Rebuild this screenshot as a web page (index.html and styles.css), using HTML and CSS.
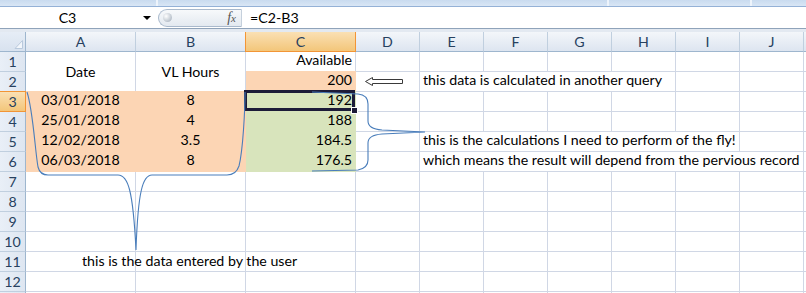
FILE: index.html
```html
<!DOCTYPE html>
<html>
<head>
<meta charset="utf-8">
<link rel="stylesheet" href="styles.css">
</head>
<body>
<div class="app">
  <div class="ribbon-edge">
    <span class="seg seg-1"></span>
    <span class="seg seg-2"></span>
    <span class="seg seg-3"></span>
    <span class="seg seg-4"></span>
  </div>
  <div class="formula-bar">
    <div class="name-box"><span class="name">C3</span><span class="dd"></span></div>
    <div class="fx-pill"><span class="knob"></span><span class="fx">f<span class="fx-x">x</span></span></div>
    <div class="formula">=C2-B3</div>
  </div>
  <div class="sep"></div>
  <div class="sheet">
    <!-- header row -->
    <div class="corner"><svg width="26" height="20" viewBox="0 0 26 20"><path d="M15 16.5 L22.5 8.5 L22.5 16.5 Z" fill="#f2f6fb" stroke="#b9c9dc"/></svg></div>
    <div class="ch">A</div>
    <div class="ch">B</div>
    <div class="ch sel">C</div>
    <div class="ch">D</div>
    <div class="ch">E</div>
    <div class="ch">F</div>
    <div class="ch">G</div>
    <div class="ch">H</div>
    <div class="ch">I</div>
    <div class="ch">J</div>
    <div class="ch k"></div>

    <!-- row 1 -->
    <div class="rh">1</div>
    <div class="c ctr mid span2r">Date</div>
    <div class="c ctr mid span2r">VL Hours</div>
    <div class="c rt">Available</div>
    <div class="c"></div><div class="c"></div><div class="c"></div><div class="c"></div><div class="c"></div><div class="c"></div><div class="c"></div>
    <div class="c k"></div>

    <!-- row 2 -->
    <div class="rh">2</div>
    <div class="c rt peach">200</div>
    <div class="c"></div>
    <div class="c span4">this data is calculated in another query</div>
    <div class="c"></div><div class="c"></div>
    <div class="c k"></div>

    <!-- row 3 -->
    <div class="rh sel">3</div>
    <div class="c ctr peach">03/01/2018</div>
    <div class="c ctr peach">8</div>
    <div class="c rt green active">192</div>
    <div class="c"></div><div class="c"></div><div class="c"></div><div class="c"></div><div class="c"></div><div class="c"></div><div class="c"></div>
    <div class="c k"></div>

    <!-- row 4 -->
    <div class="rh">4</div>
    <div class="c ctr peach">25/01/2018</div>
    <div class="c ctr peach">4</div>
    <div class="c rt green">188</div>
    <div class="c"></div><div class="c"></div><div class="c"></div><div class="c"></div><div class="c"></div><div class="c"></div><div class="c"></div>
    <div class="c k"></div>

    <!-- row 5 -->
    <div class="rh">5</div>
    <div class="c ctr peach">12/02/2018</div>
    <div class="c ctr peach">3.5</div>
    <div class="c rt green">184.5</div>
    <div class="c"></div>
    <div class="c span5">this is the calculations I need to perform of the fly!</div>
    <div class="c"></div>
    <div class="c k"></div>

    <!-- row 6 -->
    <div class="rh">6</div>
    <div class="c ctr peach">06/03/2018</div>
    <div class="c ctr peach">8</div>
    <div class="c rt green">176.5</div>
    <div class="c"></div>
    <div class="c span6">which means the result will depend from the pervious record</div>
    <div class="c k"></div>

    <!-- rows 7-13 -->
    <div class="rh">7</div>
    <div class="c"></div><div class="c"></div><div class="c"></div><div class="c"></div><div class="c"></div><div class="c"></div><div class="c"></div><div class="c"></div><div class="c"></div><div class="c"></div>
    <div class="c k"></div>

    <div class="rh">8</div>
    <div class="c"></div><div class="c"></div><div class="c"></div><div class="c"></div><div class="c"></div><div class="c"></div><div class="c"></div><div class="c"></div><div class="c"></div><div class="c"></div>
    <div class="c k"></div>

    <div class="rh">9</div>
    <div class="c"></div><div class="c"></div><div class="c"></div><div class="c"></div><div class="c"></div><div class="c"></div><div class="c"></div><div class="c"></div><div class="c"></div><div class="c"></div>
    <div class="c k"></div>

    <div class="rh">10</div>
    <div class="c"></div><div class="c"></div><div class="c"></div><div class="c"></div><div class="c"></div><div class="c"></div><div class="c"></div><div class="c"></div><div class="c"></div><div class="c"></div>
    <div class="c k"></div>

    <div class="rh">11</div>
    <div class="c"></div><div class="c"></div><div class="c"></div><div class="c"></div><div class="c"></div><div class="c"></div><div class="c"></div><div class="c"></div><div class="c"></div><div class="c"></div>
    <div class="c k"></div>

    <div class="rh">12</div>
    <div class="c"></div><div class="c"></div><div class="c"></div><div class="c"></div><div class="c"></div><div class="c"></div><div class="c"></div><div class="c"></div><div class="c"></div><div class="c"></div>
    <div class="c k"></div>

    <div class="rh"></div>
    <div class="c"></div><div class="c"></div><div class="c"></div><div class="c"></div><div class="c"></div><div class="c"></div><div class="c"></div><div class="c"></div><div class="c"></div><div class="c"></div>
    <div class="c k"></div>
  </div>

  <svg class="shapes" width="806" height="293" viewBox="0 0 806 293">
    <path class="brace" d="M27 92 C33 110, 35 150, 38 167 Q40 175, 48 175 L118 175 C128 175, 133 190, 136 250 C138 190, 143 175, 152 175 L227 175 Q236 175, 239 166 C243 150, 245 110, 245 92"/>
    <path class="brace" d="M312 92 L358 94 Q368 95, 368 104 L368 121 Q368 129, 382 130 L425 132 L382 134 Q368 135, 368 143 L368 160 Q368 168, 358 170 L312 171"/>
    <path class="arrow" d="M365.5 81.5 L372.5 77.5 L372.5 79.5 L402.5 79.5 L402.5 83.5 L372.5 83.5 L372.5 85.5 Z"/>
  </svg>
  <div class="note">this is the data entered by the user</div>
</div>
</body>
</html>
```

FILE: styles.css
```css
html, body {
  margin: 0;
  padding: 0;
  background: #ffffff;
}

.app {
  position: relative;
  width: 806px;
  height: 293px;
  overflow: hidden;
  font-family: Lato, "Liberation Sans", sans-serif;
  font-size: 14.2px;
  color: #000;
}

/* top strip (bottom of ribbon) */
.ribbon-edge {
  display: flex;
  height: 6px;
  background: linear-gradient(#c9dbef, #d9e6f5);
  border-bottom: 1px solid #94b1d6;
}
.seg {
  display: block;
  height: 100%;
  border-right: 2px solid #eef4fb;
  box-sizing: border-box;
}
.seg-1 { width: 158px; }
.seg-2 { width: 451px; }
.seg-3 { width: 143px; }
.seg-4 { flex: 1; border-right: none; }

/* formula bar */
.formula-bar {
  display: flex;
  align-items: center;
  height: 21px;
  background: #ffffff;
  border-bottom: 1px solid #8fa3ba;
}
.name-box {
  width: 158px;
  display: flex;
  align-items: center;
  position: relative;
  height: 100%;
}
.name {
  flex: 1;
  text-align: center;
  padding-left: 12px;
  padding-right: 20px;
  line-height: 21px;
}
.dd {
  width: 0;
  height: 0;
  border-left: 4px solid transparent;
  border-right: 4px solid transparent;
  border-top: 4px solid #000;
  margin-right: 7px;
  margin-top: 1px;
}
.fx-pill {
  width: 84px;
  height: 18px;
  box-sizing: border-box;
  border: 1px solid #a9b9cc;
  border-right: 1px solid #c5d0dc;
  border-radius: 9px 0 0 9px;
  background: linear-gradient(#f7f9fb, #e3e9f0);
  display: flex;
  align-items: center;
  padding-left: 4px;
}
.knob {
  width: 9px;
  height: 9px;
  border-radius: 50%;
  background: radial-gradient(circle at 35% 35%, #ffffff, #b9c2cc 70%, #9aa5b1);
}
.fx {
  margin-left: auto;
  margin-right: 5px;
  font-family: "Liberation Serif", serif;
  font-style: italic;
  font-size: 14px;
  color: #555;
  line-height: 14px;
}
.fx-x {
  font-size: 11px;
}
.formula {
  padding-left: 8px;
  line-height: 21px;
}

.sep {
  height: 3px;
  background: #e3e9f1;
}

/* sheet grid */
.sheet {
  display: grid;
  grid-template-columns: 26px 110px 110px 110px repeat(7, 64px) 2px;
  grid-auto-rows: 20px;
}

.corner {
  box-sizing: border-box;
  background: linear-gradient(#e6edf6, #d8e2ef);
  border-right: 1px solid #9eb6ce;
  border-bottom: 1px solid #9eb6ce;
}
.corner svg { display: block; }

.ch {
  box-sizing: border-box;
  background: linear-gradient(#f3f6fa, #dde5f0);
  border-right: 1px solid #c0cfdf;
  border-bottom: 1px solid #9eb6ce;
  display: flex;
  align-items: center;
  justify-content: center;
  color: #27415f;
  line-height: 16px;
  padding-top: 1px;
}
.ch.sel {
  background: linear-gradient(#fae0b4, #f3c67a);
  border-right-color: #f29536;
  border-bottom-color: #f29536;
  box-shadow: -1px 0 0 #f29536;
}
.ch.k { border-right: none; }

.rh {
  box-sizing: border-box;
  background: linear-gradient(90deg, #e9eff7, #dee6f1);
  border-right: 1px solid #9eb6ce;
  border-bottom: 1px solid #c0cfdf;
  display: flex;
  align-items: center;
  justify-content: center;
  color: #27415f;
  line-height: 16px;
  padding-top: 1px;
}
.rh.sel {
  background: linear-gradient(#fae0b4, #f3c67a);
  border-right-color: #f29536;
  border-bottom-color: #f29536;
  box-shadow: 0 -1px 0 #f29536;
}

.c {
  box-sizing: border-box;
  border-right: 1px solid #d0d7e5;
  border-bottom: 1px solid #d0d7e5;
  display: flex;
  align-items: flex-end;
  padding: 0 3px 3px;
  line-height: 16px;
  white-space: nowrap;
  min-width: 0;
}
.c.k { border-right: none; padding: 0; }
.ctr { justify-content: center; }
.rt { justify-content: flex-end; }
.mid { align-items: center; padding-bottom: 0; }
.span2r { grid-row: span 2; }
.span4 { grid-column: span 4; }
.span5 { grid-column: span 5; }
.span6 { grid-column: span 6; }

.peach {
  background: #fcd5b4;
  border-color: #fcd5b4;
  box-shadow: 0 -1px 0 #fcd5b4;
}
.green {
  background: #d8e4bc;
  border-color: #d8e4bc;
  box-shadow: 0 -1px 0 #d8e4bc;
}

.active { position: relative; }
.active::after {
  content: "";
  position: absolute;
  left: -2px;
  top: -2px;
  right: 0;
  bottom: 0;
  border: 3px solid #1c1b38;
}
.active::before {
  content: "";
  position: absolute;
  right: -3px;
  bottom: -3px;
  width: 5px;
  height: 5px;
  background: #1c1b38;
  border: 1px solid #ffffff;
  z-index: 1;
}

/* drawn shapes over the sheet */
.shapes {
  position: absolute;
  left: 0;
  top: 0;
  pointer-events: none;
}
.brace {
  fill: none;
  stroke: #4a7ebb;
  stroke-width: 1.1;
}
.arrow {
  fill: #ffffff;
  stroke: #3a3a3a;
  stroke-width: 1;
}

.note {
  position: absolute;
  left: 82px;
  top: 253px;
  line-height: 16px;
  white-space: nowrap;
}
```
